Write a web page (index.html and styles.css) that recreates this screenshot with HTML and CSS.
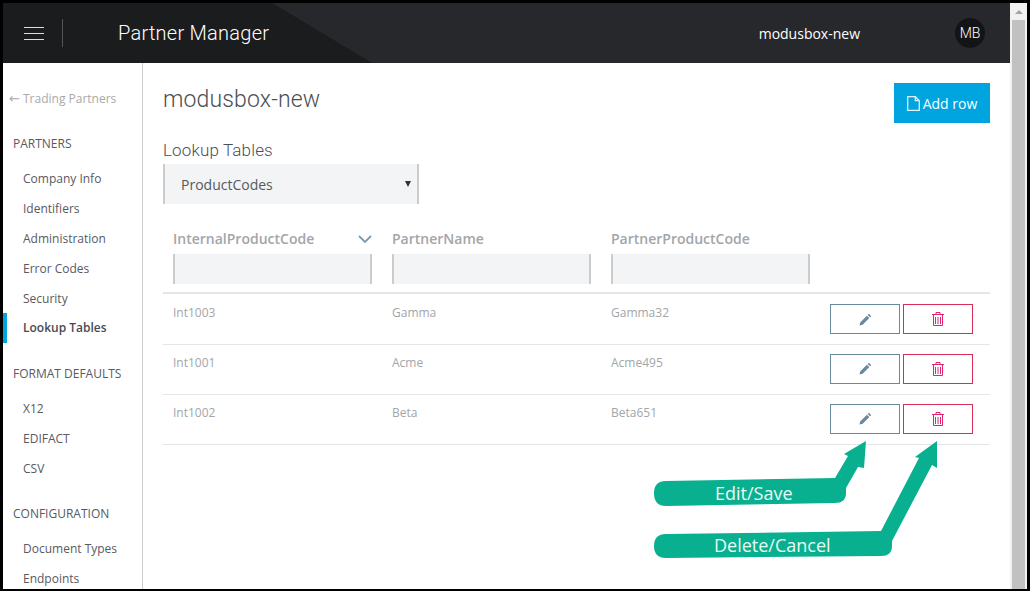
FILE: index.html
```html
<!DOCTYPE html>
<html lang="en">
<head>
  <meta charset="UTF-8" />
  <title>Partner Manager</title>
  <link rel="stylesheet" href="styles.css">
</head>
<body>
  <div class="frame">
    <div class="app">
      <div class="page">
        <header class="topbar">
          <div class="burger"><span></span><span></span><span></span></div>
          <div class="topbar-divider"></div>
          <div class="app-title">Partner Manager</div>
          <div class="company">modusbox-new</div>
          <div class="avatar">MB</div>
        </header>

        <div class="body-row">
          <nav class="sidebar">
            <a class="back"><span class="back-arrow">←</span>Trading Partners</a>
            <h4>PARTNERS</h4>
            <a class="nav-item">Company Info</a>
            <a class="nav-item">Identifiers</a>
            <a class="nav-item">Administration</a>
            <a class="nav-item">Error Codes</a>
            <a class="nav-item">Security</a>
            <a class="nav-item active">Lookup Tables</a>
            <h4>FORMAT DEFAULTS</h4>
            <a class="nav-item">X12</a>
            <a class="nav-item">EDIFACT</a>
            <a class="nav-item">CSV</a>
            <h4>CONFIGURATION</h4>
            <a class="nav-item">Document Types</a>
            <a class="nav-item">Endpoints</a>
          </nav>

          <main class="content">
            <div class="title-row">
              <h1>modusbox-new</h1>
              <button class="add-btn">
                <svg width="13" height="15" viewBox="0 0 13 15" fill="none" stroke="#dff3fb" stroke-width="1.3"><path d="M.7.7h7.6l4 4v9.6H.7z"/><path d="M8.3.7v4h4"/></svg>
                Add row
              </button>
            </div>

            <label class="table-label" for="lookup">Lookup Tables</label>
            <div class="select-wrap">
              <select id="lookup" class="lookup-select"><option>ProductCodes</option></select>
            </div>

            <table class="grid">
              <thead>
                <tr class="head-row">
                  <th><div class="sort-head">InternalProductCode
                    <svg width="14" height="8" viewBox="0 0 14 8" fill="none" stroke="#7d9bb0" stroke-width="1.8"><path d="M1 1l6 6 6-6"/></svg>
                  </div></th>
                  <th>PartnerName</th>
                  <th>PartnerProductCode</th>
                  <th></th>
                </tr>
                <tr class="filter-row">
                  <th><input type="text" /></th>
                  <th><input type="text" /></th>
                  <th><input type="text" /></th>
                  <th></th>
                </tr>
              </thead>
              <tbody>
                <tr>
                  <td>Int1003</td><td>Gamma</td><td>Gamma32</td>
                  <td><div class="actions">
                    <button class="btn-edit"><svg width="13" height="13" viewBox="0 0 14 14"><path fill="#6b8799" d="M10.6.8l2.6 2.6-1.3 1.3-2.6-2.6zM8.5 2.9l2.6 2.6-7.2 7.2L.5 13.5l.8-3.4z"/></svg></button>
                    <button class="btn-delete"><svg width="12" height="14" viewBox="0 0 12 14" fill="none" stroke="#e0246e"><path d="M0 2.5h12M4 2V.5h4V2M1.5 3v10.5h9V3M3.5 5v7M6 5v7M8.5 5v7"/></svg></button>
                  </div></td>
                </tr>
                <tr>
                  <td>Int1001</td><td>Acme</td><td>Acme495</td>
                  <td><div class="actions">
                    <button class="btn-edit"><svg width="13" height="13" viewBox="0 0 14 14"><path fill="#6b8799" d="M10.6.8l2.6 2.6-1.3 1.3-2.6-2.6zM8.5 2.9l2.6 2.6-7.2 7.2L.5 13.5l.8-3.4z"/></svg></button>
                    <button class="btn-delete"><svg width="12" height="14" viewBox="0 0 12 14" fill="none" stroke="#e0246e"><path d="M0 2.5h12M4 2V.5h4V2M1.5 3v10.5h9V3M3.5 5v7M6 5v7M8.5 5v7"/></svg></button>
                  </div></td>
                </tr>
                <tr>
                  <td>Int1002</td><td>Beta</td><td>Beta651</td>
                  <td><div class="actions">
                    <button class="btn-edit"><svg width="13" height="13" viewBox="0 0 14 14"><path fill="#6b8799" d="M10.6.8l2.6 2.6-1.3 1.3-2.6-2.6zM8.5 2.9l2.6 2.6-7.2 7.2L.5 13.5l.8-3.4z"/></svg></button>
                    <button class="btn-delete"><svg width="12" height="14" viewBox="0 0 12 14" fill="none" stroke="#e0246e"><path d="M0 2.5h12M4 2V.5h4V2M1.5 3v10.5h9V3M3.5 5v7M6 5v7M8.5 5v7"/></svg></button>
                  </div></td>
                </tr>
              </tbody>
            </table>
          </main>
        </div>
      </div>

      <div class="scrollbar">
        <div class="scroll-up"></div>
        <div class="scroll-thumb"></div>
      </div>

      <!-- callouts drawn over the screenshot -->
      <svg class="callouts" width="1030" height="591" viewBox="0 0 1030 591">
        <path fill="#08b08f" d="M666 481 L835 478 L848 456 L844 454 L866 441 L864 468 L858 467 L846 488 L846 493 Q846 503 835 503 L666 506 Q654 506 654 493 Q654 481 666 481Z"/>
        <path fill="#08b08f" d="M666 534 L881 531 L919 458 L915 457 L937 441 L937 468 L932 465 L892 541 L892 546 Q892 556 881 556 L666 558 Q654 558 654 546 Q654 534 666 534Z"/>
      </svg>
      <span class="callout-text edit-text">Edit/Save</span>
      <span class="callout-text delete-text">Delete/Cancel</span>
    </div>
  </div>
</body>
</html>
```

FILE: styles.css
```css
* {
  box-sizing: border-box;
}
html, body {
  margin: 0;
  height: 100%;
  overflow: hidden;
}
body {
  background-color: #000;
  font-family: "Open Sans", sans-serif;
}
.frame {
  height: 591px;
  padding: 3px 3px 2px 3px;
}
.app {
  height: 100%;
  display: flex;
  background-color: #fff;
  overflow: hidden;
}
.page {
  flex: 1;
  min-width: 0;
  display: flex;
  flex-direction: column;
}

/* fake scrollbar */
.scrollbar {
  width: 17px;
  flex: none;
  display: flex;
  flex-direction: column;
  align-items: center;
  background-color: #f1f1f1;
}
.scroll-up {
  flex: none;
  height: 0;
  margin-top: 7px;
  border-left: 4px solid transparent;
  border-right: 4px solid transparent;
  border-bottom: 4px solid #a3a3a3;
}
.scroll-thumb {
  width: 13px;
  flex: 1;
  margin-top: 6px;
  background-color: #c1c1c1;
}

/* top bar */
.topbar {
  height: 60px;
  flex: none;
  display: flex;
  align-items: center;
  color: #fff;
  background: linear-gradient(31deg, #1b1c1d 189.9px, #26282b 190.4px);
}
.burger {
  width: 20px;
  margin-left: 21px;
  display: flex;
  flex-direction: column;
  gap: 5px;
}
.burger span {
  height: 1px;
  background-color: #ddd;
}
.topbar-divider {
  width: 1px;
  height: 28px;
  margin-left: 18px;
  background-color: #555;
}
.app-title {
  margin-left: 55px;
  font-family: "Roboto", sans-serif;
  font-weight: 300;
  font-size: 20px;
  letter-spacing: 0.25px;
}
.company {
  margin-left: auto;
  font-size: 14px;
  font-weight: 500;
}
.avatar {
  width: 30px;
  height: 30px;
  margin: 0 25px 0 95px;
  border-radius: 50%;
  background-color: #131416;
  font-family: "Roboto", sans-serif;
  font-weight: 300;
  font-size: 14px;
  line-height: 30px;
  text-align: center;
}

.body-row {
  flex: 1;
  min-height: 0;
  display: flex;
}

/* sidebar */
.sidebar {
  width: 140px;
  flex: none;
  overflow: hidden;
  border-right: 1px solid #ccc;
  font-size: 12px;
  color: #59595f;
}
.back {
  display: flex;
  align-items: center;
  gap: 4px;
  margin: 28px 0 26px 6px;
  color: #a9a9a9;
  line-height: 16px;
}
.back-arrow {
  width: 10px;
  font-family: "DejaVu Sans", sans-serif;
  font-size: 13px;
}
.sidebar h4 {
  height: 20px;
  margin: 20px 0 10px 10px;
  font-size: 12px;
  font-weight: 400;
  line-height: 22px;
}
.back + h4 {
  margin-top: 0;
}
.nav-item {
  display: block;
  height: 30px;
  padding-left: 20px;
  line-height: 32px;
}
.nav-item.active {
  border-left: 4px solid #00a5e0;
  padding-left: 16px;
  line-height: 29px;
  font-weight: 600;
  color: #4a4a50;
}

/* main area */
.content {
  flex: 1;
  min-width: 0;
  padding: 20px 20px 0 20px;
}
.title-row {
  display: flex;
  justify-content: space-between;
  height: 57px;
}
h1 {
  margin: 1px 0 0;
  font-family: "Roboto", sans-serif;
  font-weight: 300;
  font-size: 23px;
  letter-spacing: 0.15px;
  line-height: 32px;
  color: #4a4f55;
}
.add-btn {
  width: 96px;
  height: 40px;
  display: flex;
  align-items: center;
  justify-content: center;
  gap: 3px;
  border: none;
  background-color: #00a5e0;
  color: #fff;
  font-family: "Open Sans", sans-serif;
  font-size: 14px;
  font-weight: 400;
}
.table-label {
  display: block;
  height: 24px;
  font-family: "Roboto", sans-serif;
  font-weight: 300;
  font-size: 17px;
  letter-spacing: 0.15px;
  line-height: 20px;
  color: #4a4f55;
}
.select-wrap {
  position: relative;
  width: 256px;
  height: 40px;
}
.select-wrap::after {
  content: "";
  position: absolute;
  right: 8px;
  top: 17px;
  border-left: 3px solid transparent;
  border-right: 3px solid transparent;
  border-top: 6px solid #333;
}
.lookup-select {
  appearance: none;
  width: 100%;
  height: 100%;
  padding-left: 16px;
  border: none;
  border-left: 2px solid #ccc;
  border-right: 2px solid #ccc;
  border-radius: 0;
  background-color: #f3f4f6;
  color: #55595f;
  font-family: "Open Sans", sans-serif;
  font-size: 14px;
}

/* table */
.grid {
  width: 827px;
  margin-top: 20px;
  border-collapse: collapse;
  table-layout: fixed;
}
.grid th {
  padding: 0 0 0 10px;
  width: 219px;
  text-align: left;
  vertical-align: top;
}
.grid th:last-child {
  width: auto;
}
.head-row th {
  height: 30px;
  font-size: 14px;
  font-weight: 600;
  line-height: 30px;
  color: #a3a5a8;
}
.sort-head {
  display: flex;
  align-items: center;
  justify-content: space-between;
  margin-right: 10px;
}
.filter-row th {
  height: 39px;
  border-bottom: 2px solid #e6e6e6;
}
.filter-row input {
  display: block;
  width: 199px;
  height: 30px;
  border: none;
  border-left: 2px solid #ccc;
  border-right: 2px solid #ccc;
  background-color: #f3f4f6;
}
.grid td {
  height: 50px;
  padding: 9px 0 0 10px;
  vertical-align: top;
  border-bottom: 1px solid #e6e6e6;
  font-size: 12px;
  line-height: 18px;
  color: #a3a5a8;
}
.grid tbody tr:first-child td {
  height: 51px;
  padding-top: 10px;
}
.actions {
  display: flex;
  gap: 3px;
}
.actions button {
  width: 70px;
  height: 30px;
  display: flex;
  align-items: center;
  justify-content: center;
  padding: 0;
  background-color: #fff;
}
.btn-edit {
  border: 1px solid #678a9c;
}
.btn-delete {
  border: 1px solid #d92d55;
}

/* annotations */
.callouts {
  position: absolute;
  left: 0;
  top: 0;
  pointer-events: none;
}
.callout-text {
  position: absolute;
  font-family: "Open Sans", sans-serif;
  font-size: 18px;
  line-height: 24px;
  color: #eafaf6;
}
.edit-text {
  left: 715px;
  top: 481px;
}
.delete-text {
  left: 714px;
  top: 533px;
}
```
